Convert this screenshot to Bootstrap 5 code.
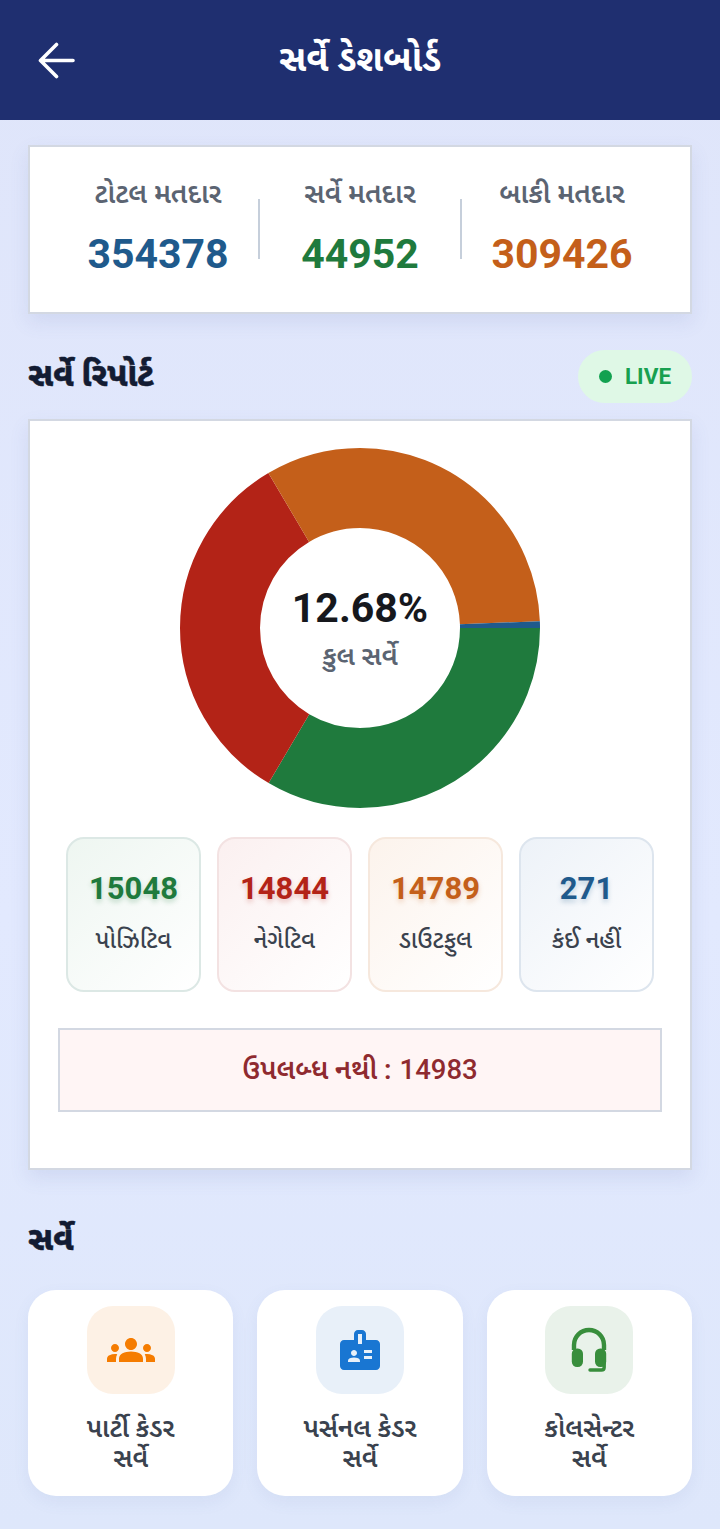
<!DOCTYPE html>
<html lang="gu">
<head>
    <meta charset="UTF-8" />
    <meta name="viewport" content="width=device-width, initial-scale=1" />
    <title>સર્વે ડેશબોર્ડ</title>
    <link href="https://cdn.jsdelivr.net/npm/bootstrap@5.3.2/dist/css/bootstrap.min.css" rel="stylesheet" />
    <style>
        body {
            font-family: Roboto, "Noto Sans", "Noto Sans Gujarati", sans-serif;
            background: linear-gradient(180deg, #dfe5fa 0%, #e2e9fe 60%, #dee7fb 100%);
            width: 720px;
            height: 1529px;
            overflow: hidden;
        }
        .top-head {
            height: 120px;
            background-color: #1f2f70;
            color: #fff;
            display: grid;
            grid-template-columns: 1fr auto 1fr;
            align-items: center;
            padding: 0 38px;
        }
        .top-head h1 { font-size: 36px; font-weight: 700; margin: 0; }
        .page-wrap { padding: 25px 28px 0; }
        .flat-card {
            background: #fff;
            border: 2px solid #d3d8e2;
            box-shadow: 0 8px 18px rgba(90, 110, 170, .12);
        }
        .summary-card { height: 169px; padding: 29px 28px 0; }
        .sum-col { flex: 1 1 0; text-align: center; }
        .sum-label { font-size: 27.5px; font-weight: 600; color: #5b6472; line-height: 34px; padding-top: 1px; }
        .sum-num { font-size: 41px; font-weight: 700; line-height: 46px; margin-top: 20px; }
        .sum-sep { width: 2px; height: 60px; background: #c6cfdb; margin-top: 23px; }
        .c-blue { color: #1f5a8c; }
        .c-green { color: #1f7a3d; }
        .c-orange { color: #c45f1a; }
        .c-red { color: #b32317; }
        .sec-title { font-size: 32.5px; font-weight: 800; color: #131c33; margin: 0; -webkit-text-stroke: .5px #131c33; }
        .report-head { height: 105px; padding-top: 42px; }
        .live-pill {
            width: 114px;
            height: 53px;
            border-radius: 27px;
            background: #dff8e6;
            color: #18a050;
            font-size: 22.5px;
            font-weight: 700;
            margin-top: -6px;
        }
        .live-dot { width: 13px; height: 13px; border-radius: 50%; background: #12a150; margin-right: 5px; }
        .chart-card { height: 751px; padding: 27px 28px 0; }
        .donut-box { width: 360px; height: 360px; margin: 0 auto; }
        .donut-mid { position: absolute; inset: 0; padding-top: 2px; }
        .donut-pct { font-size: 41px; font-weight: 700; color: #16181d; line-height: 46px; }
        .donut-sub { font-size: 27px; font-weight: 600; color: #5b6472; line-height: 34px; margin-top: 8px; }
        .tile-row { display: grid; grid-template-columns: repeat(4, 135px); gap: 16px; margin: 29px 8px 0; }
        .stat-tile {
            height: 155px;
            border-radius: 18px;
            border: 2px solid;
            text-align: center;
            padding-top: 31px;
        }
        .stat-num { font-size: 31px; font-weight: 700; line-height: 38px; }
        .stat-label { font-size: 24px; font-weight: 500; color: #3a424e; line-height: 30px; margin-top: 17px; }
        .t-green { background: linear-gradient(135deg, #eef6f1, #fff); border-color: #dce8e5; }
        .t-red { background: linear-gradient(135deg, #fbf0f0, #fff); border-color: #f3e2e2; }
        .t-orange { background: linear-gradient(135deg, #fcf3ec, #fff); border-color: #f6e8dd; }
        .t-blue { background: linear-gradient(135deg, #edf2f8, #fff); border-color: #dde5ee; }
        .t-green .stat-num { text-shadow: 0 3px 5px rgba(31, 122, 61, .25); }
        .t-red .stat-num { text-shadow: 0 3px 5px rgba(179, 35, 23, .25); }
        .t-orange .stat-num { text-shadow: 0 3px 5px rgba(196, 95, 26, .25); }
        .t-blue .stat-num { text-shadow: 0 3px 5px rgba(31, 90, 140, .25); }
        .na-box {
            height: 84px;
            background: #fff5f5;
            border: 2px solid #d3d8e2;
            color: #8f2a2f;
            font-size: 27.5px;
            font-weight: 600;
            margin-top: 36px;
        }
        .na-count { font-weight: 500; }
        .survey-head { height: 120px; padding-top: 50px; }
        .survey-row { display: grid; grid-template-columns: repeat(3, 1fr); gap: 24px; }
        .survey-tile {
            height: 206px;
            background: #fff;
            border-radius: 28px;
            padding-top: 16px;
            text-align: center;
            box-shadow: 0 6px 16px rgba(90, 110, 170, .08);
        }
        .survey-ico { width: 88px; height: 88px; border-radius: 26px; margin: 0 auto; }
        .survey-ico svg { width: 48px; height: 48px; }
        .survey-txt { font-size: 26px; font-weight: 600; color: #3a424e; line-height: 30px; margin-top: 19px; }
        .i-orange { background: #fdf1e5; color: #f57c00; }
        .i-blue { background: #e8f0f9; color: #1976d2; }
        .i-green { background: #e9f2ea; color: #388e3c; }
    </style>
</head>
<body>
<header class="top-head">
    <svg width="38" height="38" viewBox="0 0 38 38" fill="none" stroke="#fff" stroke-width="3.6" stroke-linecap="round" stroke-linejoin="round" aria-label="Back">
        <path d="M35 19.5H3M18.5 3.5 2.5 19.5 18.5 35.5" />
    </svg>
    <h1>સર્વે ડેશબોર્ડ</h1>
    <span></span>
</header>

<main class="page-wrap">
    <section class="flat-card summary-card d-flex align-items-start">
        <div class="sum-col">
            <div class="sum-label">ટોટલ મતદાર</div>
            <div class="sum-num c-blue">354378</div>
        </div>
        <div class="sum-sep"></div>
        <div class="sum-col">
            <div class="sum-label">સર્વે મતદાર</div>
            <div class="sum-num c-green">44952</div>
        </div>
        <div class="sum-sep"></div>
        <div class="sum-col">
            <div class="sum-label">બાકી મતદાર</div>
            <div class="sum-num c-orange">309426</div>
        </div>
    </section>

    <div class="report-head d-flex justify-content-between align-items-start">
        <h2 class="sec-title">સર્વે રિપોર્ટ</h2>
        <div class="live-pill d-flex align-items-center justify-content-center gap-2">
            <span class="live-dot"></span>LIVE
        </div>
    </div>

    <section class="flat-card chart-card">
        <div class="donut-box position-relative">
            <!-- segments use pathLength 360, so the dash values are degrees -->
            <svg width="360" height="360" viewBox="0 0 360 360" fill="none" stroke-width="80">
                <circle cx="180" cy="180" r="140" pathLength="360" stroke="#1f7a3d" stroke-dasharray="120.51 360" />
                <circle cx="180" cy="180" r="140" pathLength="360" stroke="#b32317" stroke-dasharray="118.88 360" stroke-dashoffset="-120.51" />
                <circle cx="180" cy="180" r="140" pathLength="360" stroke="#c45f1a" stroke-dasharray="118.44 360" stroke-dashoffset="-239.39" />
                <circle cx="180" cy="180" r="140" pathLength="360" stroke="#1f5a8c" stroke-dasharray="2.17 360" stroke-dashoffset="-357.83" />
            </svg>
            <div class="donut-mid d-flex flex-column align-items-center justify-content-center">
                <div class="donut-pct">12.68%</div>
                <div class="donut-sub">કુલ સર્વે</div>
            </div>
        </div>

        <div class="tile-row">
            <div class="stat-tile t-green">
                <div class="stat-num c-green">15048</div>
                <div class="stat-label">પોઝિટિવ</div>
            </div>
            <div class="stat-tile t-red">
                <div class="stat-num c-red">14844</div>
                <div class="stat-label">નેગેટિવ</div>
            </div>
            <div class="stat-tile t-orange">
                <div class="stat-num c-orange">14789</div>
                <div class="stat-label">ડાઉટફુલ</div>
            </div>
            <div class="stat-tile t-blue">
                <div class="stat-num c-blue">271</div>
                <div class="stat-label">કંઈ નહીં</div>
            </div>
        </div>

        <div class="na-box d-flex align-items-center justify-content-center gap-2">ઉપલબ્ધ નથી : <span class="na-count">14983</span></div>
    </section>

    <div class="survey-head">
        <h2 class="sec-title">સર્વે</h2>
    </div>

    <div class="survey-row">
        <div class="survey-tile">
            <div class="survey-ico i-orange d-flex align-items-center justify-content-center">
                <svg viewBox="0 0 24 24" fill="currentColor"><path d="M12 12.75c1.63 0 3.07.39 4.24.9 1.08.48 1.76 1.56 1.76 2.73V18H6v-1.61c0-1.18.68-2.26 1.76-2.73 1.17-.52 2.61-.91 4.24-.91zM4 13c1.1 0 2-.9 2-2s-.9-2-2-2-2 .9-2 2 .9 2 2 2zm1.13 1.1c-.37-.06-.74-.1-1.13-.1-.99 0-1.93.21-2.78.58C.48 14.9 0 15.62 0 16.43V18h4.5v-1.61c0-.83.23-1.61.63-2.29zM20 13c1.1 0 2-.9 2-2s-.9-2-2-2-2 .9-2 2 .9 2 2 2zm4 3.43c0-.81-.48-1.53-1.22-1.85-.85-.37-1.79-.58-2.78-.58-.39 0-.76.04-1.13.1.4.68.63 1.46.63 2.29V18H24v-1.57zM12 6c1.66 0 3 1.34 3 3s-1.34 3-3 3-3-1.34-3-3 1.34-3 3-3z"/></svg>
            </div>
            <div class="survey-txt">પાર્ટી કેડર<br>સર્વે</div>
        </div>
        <div class="survey-tile">
            <div class="survey-ico i-blue d-flex align-items-center justify-content-center">
                <svg viewBox="0 0 24 24" fill="currentColor"><path d="M20 7h-5V4c0-1.1-.9-2-2-2h-2c-1.1 0-2 .9-2 2v3H4c-1.1 0-2 .9-2 2v11c0 1.1.9 2 2 2h16c1.1 0 2-.9 2-2V9c0-1.1-.9-2-2-2zM9 12c.83 0 1.5.67 1.5 1.5S9.83 15 9 15s-1.5-.67-1.5-1.5S8.17 12 9 12zm3 6H6v-.43c0-.6.36-1.15.92-1.39.64-.28 1.34-.43 2.08-.43s1.44.15 2.08.43c.55.24.92.78.92 1.39V18zm1-9h-2V4h2v5zm5 7.5h-4V15h4v1.5zm0-3h-4V12h4v1.5z"/></svg>
            </div>
            <div class="survey-txt">પર્સનલ કેડર<br>સર્વે</div>
        </div>
        <div class="survey-tile">
            <div class="survey-ico i-green d-flex align-items-center justify-content-center">
                <svg viewBox="0 0 24 24" fill="currentColor">
                    <path d="M4.5 12v-2.5a7.5 7.5 0 0 1 15 0V12" fill="none" stroke="currentColor" stroke-width="2.2" />
                    <rect x="3.4" y="11.3" width="5.6" height="9.2" rx="2.6" />
                    <rect x="15" y="11.3" width="5.6" height="9.2" rx="2.6" />
                    <path d="M19.6 18v2.6q0 1.4-1.4 1.4h-5.7" fill="none" stroke="currentColor" stroke-width="1.7" stroke-linecap="round" />
                </svg>
            </div>
            <div class="survey-txt">કોલસેન્ટર<br>સર્વે</div>
        </div>
    </div>
</main>
<script src="https://cdn.jsdelivr.net/npm/bootstrap@5.3.2/dist/js/bootstrap.bundle.min.js"></script>
</body>
</html>
